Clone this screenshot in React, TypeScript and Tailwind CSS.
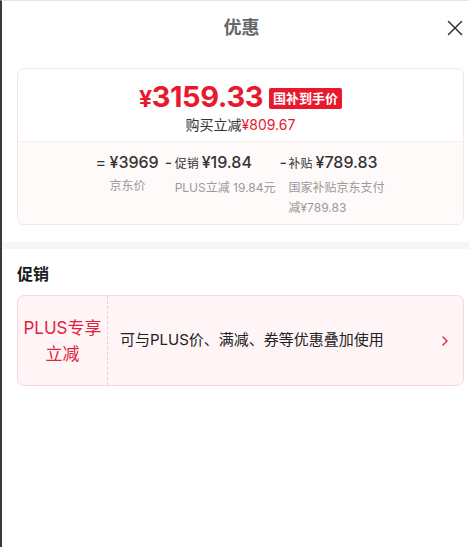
import React from 'react'

const font = { fontFamily: 'Inter, "Noto Sans CJK SC", sans-serif' }

function PriceCol({ op, opWidth, label, amount, sub, subWidth }: { op: string; opWidth: string; label?: string; amount: string; sub: string; subWidth?: string }) {
  return (
    <div className="flex items-start">
      <span className={`${opWidth} text-[16px] leading-[24px] text-[#333]`}>{op}</span>
      <div className="flex flex-col">
        <div className="flex items-baseline gap-[3px] leading-[24px]">
          {label && <span className="text-[12px] text-[#333]">{label}</span>}
          <span className="text-[16px] font-medium text-[#333]">{amount}</span>
        </div>
        <div className={`mt-[2px] text-[12px] leading-[20px] text-[#999] ${subWidth ?? ''}`}>{sub}</div>
      </div>
    </div>
  )
}

export default function App() {
  return (
    <div className="relative h-[547px] w-[469px] overflow-hidden border-l-2 border-t border-l-[#3a3a3a] border-t-[#e6e6e6] bg-white" style={font}>
      {/* Header */}
      <div className="relative flex h-[53px] items-center justify-center">
        <span className="pl-[12px] text-[18px] font-bold text-[#666]">优惠</span>
        <svg className="absolute right-[6px] top-[19px]" width="16" height="16" viewBox="0 0 16 16" fill="none">
          <path d="M1.5 1.5l13 13M14.5 1.5l-13 13" stroke="#333" strokeWidth="1.5" strokeLinecap="round" />
        </svg>
      </div>

      {/* Price card */}
      <div className="ml-[15px] mr-[5px] mt-[14px] overflow-hidden rounded-[7px] border border-[#f6e4e7]">
        <div className="flex flex-col items-center pb-[5px] pt-[13px]">
          <div className="flex items-center gap-[6px]">
            <span className="text-[29px] font-bold leading-[30px] tracking-[-0.4px] text-[#e8192c]">
              <span className="text-[23px]">¥</span>3159.33
            </span>
            <span className="rounded-[2px] bg-[#e8192c] px-[4px] text-[13px] font-bold leading-[21px] text-white">国补到手价</span>
          </div>
          <div className="text-[14px] leading-[22px] text-[#333]">
            购买立减<span className="text-[#e8192c]">¥809.67</span>
          </div>
        </div>
        <div className="flex justify-center gap-[6px] border-t border-[#fbeef0] bg-[#fffafa] pb-[6px] pt-[8px]">
          <PriceCol op="=" opWidth="w-[14px]" amount="¥3969" sub="京东价" />
          <PriceCol op="-" opWidth="w-[10px]" label="促销" amount="¥19.84" sub="PLUS立减 19.84元" />
          <div className="-ml-[2px]">
            <PriceCol op="-" opWidth="w-[9px]" label="补贴" amount="¥789.83" sub="国家补贴京东支付减¥789.83" subWidth="w-[97px]" />
          </div>
        </div>
      </div>

      {/* Divider band */}
      <div className="mt-[17px] h-[7px] bg-[#f5f6fa]" />

      {/* Promotions */}
      <div className="ml-[15px] mr-[5px]">
        <div className="pt-[14px] text-[16px] font-bold leading-[22px] text-[#1a1a1a]">促销</div>
        <div className="mt-[10px] flex h-[91px] items-stretch rounded-[7px] border border-[#f4d8dd] bg-[#fff5f6]">
          <div className="flex w-[90px] shrink-0 items-center justify-center border-r border-dashed border-r-[#e8cfd4] text-center text-[17px] leading-[26px] text-[#e2233b]">
            PLUS专享<br />立减
          </div>
          <div className="flex flex-1 items-center pl-[12px] text-[15px] text-[#222]">可与PLUS价、满减、券等优惠叠加使用</div>
          <div className="flex items-center pr-[14px]">
            <svg width="8" height="12" viewBox="0 0 8 12" fill="none">
              <path d="M2 2l4 4-4 4" stroke="#e2233b" strokeWidth="1.4" strokeLinecap="round" strokeLinejoin="round" />
            </svg>
          </div>
        </div>
      </div>
    </div>
  )
}
